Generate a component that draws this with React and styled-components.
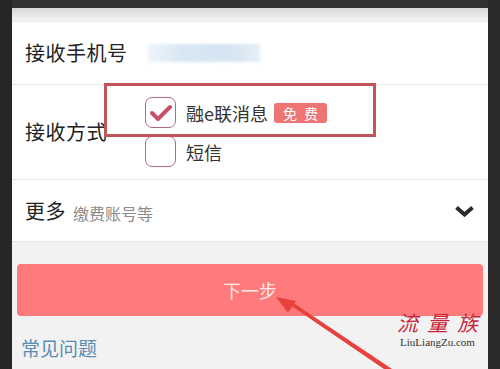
import React from 'react'
import styled, { createGlobalStyle } from 'styled-components'

const GlobalStyle = createGlobalStyle`
  html, body {
    margin: 0;
    padding: 0;
    background: #2a2a2a;
  }
  body {
    font-family: "Noto Sans CJK SC", "Noto Sans", sans-serif;
  }
`

const Page = styled.div`
  position: relative;
  display: flex;
  width: 500px;
  height: 369px;
  overflow: hidden;
  background: #2a2a2a;
`

const Side = styled.div`
  width: ${p => p.w}px;
  flex: none;
  background: ${p => p.bg};
`

const Phone = styled.div`
  width: 476px;
  flex: none;
  display: flex;
  flex-direction: column;
  background: #f2f2f2;
`

const TopBar = styled.div`
  height: 8px;
  background: #333;
`

const Shade = styled.div`
  height: 13px;
  background: linear-gradient(#d6d6d6, #f4f4f4);
  border-bottom: 1px solid #ececec;
`

const Form = styled.div`
  background: #fff;
  display: flex;
  flex-direction: column;
`

const Row = styled.div`
  height: ${p => p.h}px;
  display: flex;
  align-items: center;
  padding: 0 13px;
  border-bottom: 1px solid #e6e6e6;
`

const Label = styled.span`
  font-size: 20px;
  letter-spacing: 0.5px;
  color: #222;
  width: ${p => p.w || 'auto'};
  white-space: nowrap;
  flex: none;
  line-height: 1;
`

const Masked = styled.div`
  width: 112px;
  height: 18px;
  margin-left: 20px;
  background: linear-gradient(90deg, #eef4fa 0%, #d8e7f4 30%, #d4e4f2 70%, #e4eef7 100%);
  filter: blur(1.5px);
`

const Options = styled.div`
  display: flex;
  flex-direction: column;
  gap: 8px;
  margin-left: 36px;
`

const Option = styled.label`
  display: flex;
  align-items: center;
  gap: 10px;
  font-size: 18px;
  color: #333;
`

const Box = styled.span`
  width: 29px;
  height: 29px;
  border: 1.5px solid #b46b78;
  border-radius: 7px;
  display: flex;
  align-items: center;
  justify-content: center;
  background: #fff;
`

const Badge = styled.span`
  margin-left: -4px;
  background: #ef7474;
  color: #fff;
  font-size: 14px;
  letter-spacing: 7px;
  padding: 0 2px 0 9px;
  height: 20px;
  line-height: 20px;
  border-radius: 3px;
`

const Hint = styled.span`
  font-size: 16px;
  color: #8a8a8a;
  margin-left: 7px;
  margin-top: 4px;
`

const Spacer = styled.div`
  flex: 1;
`

const NextButton = styled.button`
  margin: 22px 5px 0;
  height: 52px;
  border: none;
  border-radius: 4px;
  background: #ff7b7b;
  color: #fde8e8;
  font-family: inherit;
  font-size: 18px;
  padding: 0;
`

const FaqLink = styled.a`
  margin: 18px 0 0 9px;
  font-size: 19px;
  color: #5a8db2;
  text-decoration: none;
`

const Annotation = styled.div`
  position: absolute;
  left: 104px;
  top: 83px;
  width: 266px;
  height: 48px;
  border: 3px solid #c2545a;
  pointer-events: none;
`

const Overlay = styled.svg`
  position: absolute;
  left: 0;
  top: 0;
  pointer-events: none;
`

const Watermark = styled.div`
  position: absolute;
  left: 397px;
  top: 311px;
  display: flex;
  flex-direction: column;
  align-items: center;
  gap: 4px;
  pointer-events: none;
`

const WatermarkTitle = styled.span`
  font-family: "Noto Sans CJK SC", serif;
  font-style: italic;
  font-size: 21px;
  line-height: 22px;
  letter-spacing: 9px;
  margin-right: -9px;
  color: #c8283c;
`

const WatermarkUrl = styled.span`
  font-family: "Liberation Serif", serif;
  font-size: 11px;
  line-height: 11px;
  color: #333;
`

const Check = () => (
  <svg width="22" height="18" viewBox="0 0 22 18">
    <polyline points="2,9 8,15 20,3" fill="none" stroke="#c8506a" strokeWidth="4" strokeLinecap="round" strokeLinejoin="round" />
  </svg>
)

const Chevron = () => (
  <svg width="21" height="12" viewBox="0 0 21 12">
    <polyline points="2.5,2.5 10.5,9.5 18.5,2.5" fill="none" stroke="#2b2b2b" strokeWidth="4" strokeLinejoin="miter" />
  </svg>
)

export default function App() {
  return (
    <Page>
      <GlobalStyle />
      <Side w={12} bg="#262626" />
      <Phone>
        <TopBar />
        <Shade />
        <Form>
          <Row h={62}>
            <Label>接收手机号</Label>
            <Masked />
          </Row>
          <Row h={94}>
            <Label w="84px">接收方式</Label>
            <Options>
              <Option>
                <Box><Check /></Box>
                融e联消息
                <Badge>免费</Badge>
              </Option>
              <Option>
                <Box />
                短信
              </Option>
            </Options>
          </Row>
          <Row h={61}>
            <Label>更多</Label>
            <Hint>缴费账号等</Hint>
            <Spacer />
            <Chevron />
          </Row>
        </Form>
        <NextButton>下一步</NextButton>
        <FaqLink>常见问题</FaqLink>
      </Phone>
      <Side w={12} bg="#2b2b2b" />

      <Annotation />
      <Overlay width="500" height="369" viewBox="0 0 500 369">
        <polygon points="276,297 296,301 288,313" fill="#e8413c" />
        <polygon points="290,305 292,302 392,369 384,369" fill="#e8413c" />
      </Overlay>
      <Watermark>
        <WatermarkTitle>流量族</WatermarkTitle>
        <WatermarkUrl>LiuLiangZu.com</WatermarkUrl>
      </Watermark>
    </Page>
  )
}
